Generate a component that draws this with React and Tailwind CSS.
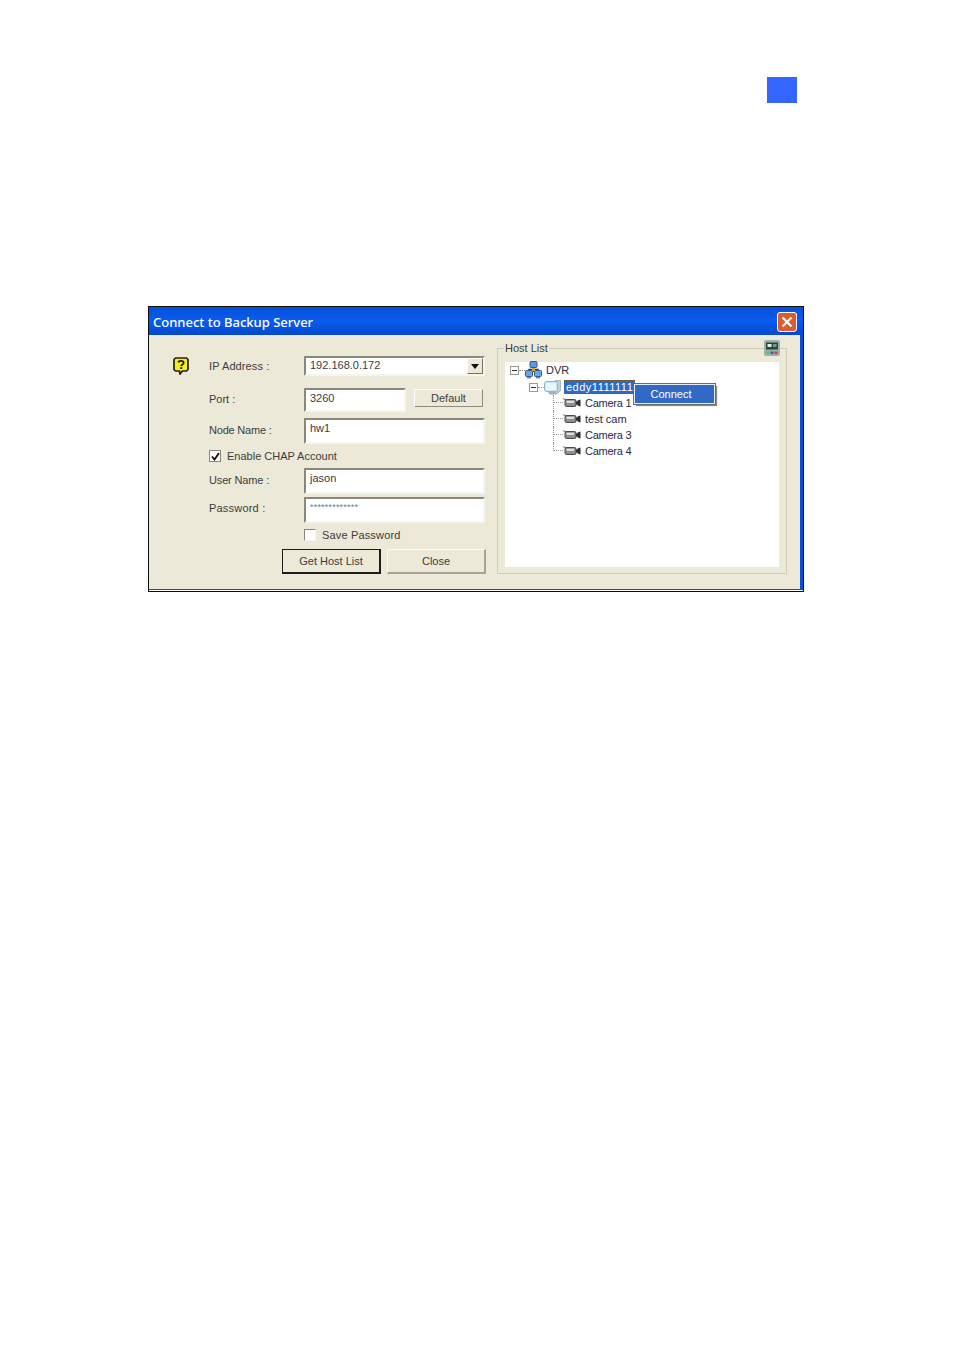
import React from 'react';

const ui = "font-['Liberation_Sans',Arial,sans-serif] text-[11px] text-[#3c3c3c]";

const HelpIcon = () => (
  <svg width="16" height="18" viewBox="0 0 16 18">
    <path d="M2.5 1h11l1.5 1.5v10L13.5 14H9.5L7 17l-.5-3h-4L1 12.500V2.500z" fill="#f5ee1e" stroke="#23230a" strokeWidth="1.7" />
    <path d="M5.400 5.500c.3-2 5.200-2.200 5.200.4 0 1.700-2.300 1.500-2.400 3.200" fill="none" stroke="#23230a" strokeWidth="1.8" />
    <rect x="7.200" y="10.200" width="2" height="1.800" fill="#23230a" />
  </svg>
);

const NetworkIcon = () => (
  <svg width="17" height="18" viewBox="0 0 17 18">
    <path d="M8.500 6v5M4 11V8.500h9V11" fill="none" stroke="#2b3550" strokeWidth="1.400" />
    <rect x="5" y="0.500" width="7" height="6" rx="1" fill="#5c9ae4" stroke="#2f5a94" />
    <rect x="0.500" y="9.500" width="7" height="6" rx="1" fill="#69a6ea" stroke="#2f5a94" />
    <rect x="9.500" y="9.500" width="7" height="6" rx="1" fill="#69a6ea" stroke="#2f5a94" />
    <rect x="7" y="7" width="3" height="3" fill="#d8a21f" />
    <path d="M2 16.800h4M11 16.800h4" stroke="#7e8794" strokeWidth="1.400" />
  </svg>
);

const MonitorIcon = () => (
  <svg width="17" height="15" viewBox="0 0 17 15">
    <path d="M11 0.500h5.500v10l-3 3h-2z" fill="#c9ced6" stroke="#98a0aa" strokeWidth="0.700" />
    <rect x="0.500" y="1.500" width="13" height="10" rx="2" fill="#c6e8f8" stroke="#9cb2c2" />
    <rect x="2" y="3" width="10" height="7" rx="1" fill="#e6f6fd" />
    <path d="M4 12h7l2 2.500H5.500z" fill="#aab0b8" />
  </svg>
);

const CameraIcon = () => (
  <svg width="18" height="10" viewBox="0 0 18 10">
    <path d="M0 0.500l4 2" stroke="#777" strokeWidth="1.100" />
    <rect x="2" y="1.500" width="11" height="7" rx="1.500" fill="#8f8f8f" stroke="#3a3a3a" strokeWidth="0.900" />
    <rect x="3.500" y="2.800" width="7.500" height="2.200" fill="#dedede" />
    <path d="M13 3.500h1.500V2.500l3-1v7l-3-1V6.500H13z" fill="#2c2c2c" />
  </svg>
);

const ToolIcon = () => (
  <svg width="16" height="16" viewBox="0 0 16 16">
    <rect x="0" y="0" width="16" height="16" rx="2" fill="#9fb0a8" />
    <rect x="2" y="2.500" width="12" height="7" fill="#26453c" />
    <rect x="3.500" y="4" width="4" height="3" fill="#e4efe8" />
    <rect x="9" y="4" width="3.500" height="3" fill="#6f9c8a" />
    <rect x="2.500" y="11.500" width="3" height="2.500" fill="#3fcf5a" />
    <rect x="6.500" y="11.500" width="3" height="2.500" fill="#3b55d8" />
    <rect x="10.500" y="11.500" width="3" height="2.500" fill="#e0353a" />
  </svg>
);

const Expander = () => (
  <span className="flex h-[9px] w-[9px] shrink-0 items-center justify-center border border-[#9a9a8e] bg-white">
    <span className="h-px w-[5px] bg-[#333]" />
  </span>
);

const Field = ({ children, className = '' }) => (
  <div className={`border-2 border-t-[#8b887a] border-l-[#8b887a] border-r-[#f6f5ee] border-b-[#f6f5ee] bg-white pl-[4px] pt-[2px] leading-[13px] ${className}`}>
    {children}
  </div>
);

const FormRow = ({ label, labelClass = 'pb-px', className = '', children }) => (
  <div className={`flex items-center ${className}`}>
    <span className={`w-[95px] shrink-0 ${labelClass}`}>{label}</span>
    {children}
  </div>
);

const CameraRow = ({ name, nameClass = 'tracking-[-0.25px]', last }) => (
  <div className="ml-[48px] flex h-4 items-center">
    <div className={`w-[10px] shrink-0 self-start border-l border-dotted border-[#9a9a9a] ${last ? 'h-2' : 'h-4'}`}>
      <div className="h-2 border-b border-dotted border-[#9a9a9a]" />
    </div>
    <CameraIcon />
    <span className={`ml-[4px] ${nameClass}`}>{name}</span>
  </div>
);

export default function App() {
  return (
    <div className={`min-h-[1350px] bg-[#fefefe] pt-[77px] ${ui}`}>
      <div className="ml-[767px] h-[26px] w-[30px] bg-[#3366ff]" />

      <div className="ml-[148px] mt-[203px] h-[285px] w-[656px] border border-b-0 border-[#0d0d16] bg-[#0a4fdc]">
        <div className="flex h-[28px] items-center justify-between bg-gradient-to-b from-[#0550d8] via-[#0a5cf0] to-[#0348cc] pl-[4px] pr-[6px] pt-[2px]">
          <span className="pt-[2px] font-['Noto_Sans',sans-serif] text-[13px] font-medium text-white">Connect to Backup Server</span>
          <button className="flex h-[20px] w-[20px] items-center justify-center rounded-[3px] border border-white bg-[#de5a30]">
            <svg width="12" height="12" viewBox="0 0 12 12">
              <path d="M1.500 1.500l9 9M10.500 1.500l-9 9" stroke="#fff" strokeWidth="2.200" />
            </svg>
          </button>
        </div>

        <div className="mr-[3px] flex h-[254px] bg-[#ece9d8]">
          <div className="w-[60px] shrink-0 pl-[24px] pt-[22px]">
            <HelpIcon />
          </div>

          <div className="w-[288px] shrink-0 pt-[21px]">
            <FormRow label="IP Address :" labelClass="tracking-[0.1px]">
              <Field className="flex h-[20px] w-[181px] justify-between !pt-0 pr-0">
                <span className="pt-px">192.168.0.172</span>
                <span className="flex h-[16px] w-[16px] items-center justify-center border border-t-white border-l-white border-r-[#77756a] border-b-[#77756a] bg-[#ece9d8]">
                  <svg width="8" height="5" viewBox="0 0 8 5"><path d="M0 0h8L4 5z" fill="#111" /></svg>
                </span>
              </Field>
            </FormRow>
            <FormRow label="Port :" className="mt-[12px]">
              <Field className="h-[24px] w-[102px]">3260</Field>
              <button className="mb-[4px] ml-[8px] h-[18px] w-[69px] border border-t-white border-l-white border-r-[#8f8d80] border-b-[#8f8d80] bg-[#ece9d8]">Default</button>
            </FormRow>
            <FormRow label="Node Name :" labelClass="pb-px tracking-[-0.2px]" className="mt-[6px]">
              <Field className="h-[26px] w-[181px]">hw1</Field>
            </FormRow>
            <label className="mt-[6px] flex h-[12px] items-center">
              <span className="flex h-[12px] w-[12px] items-center justify-center border border-[#8b887a] bg-white">
                <svg width="9" height="9" viewBox="0 0 9 9"><path d="M1 4.500l2.500 3L8 1" fill="none" stroke="#111" strokeWidth="1.900" /></svg>
              </span>
              <span className="ml-[6px]">Enable CHAP Account</span>
            </label>
            <FormRow label="User Name :" labelClass="pb-px tracking-[-0.15px]" className="mt-[6px]">
              <Field className="h-[26px] w-[181px]">jason</Field>
            </FormRow>
            <FormRow label="Password :" labelClass="pb-[3px] tracking-[0.2px]" className="mt-[3px]">
              <Field className="h-[26px] w-[181px] text-[9px] tracking-[0.2px] text-[#5a7f9a]">*************</Field>
            </FormRow>
            <label className="ml-[95px] mt-[6px] flex h-[12px] items-center">
              <span className="h-[12px] w-[12px] border border-t-[#8b887a] border-l-[#8b887a] border-r-[#f6f5ee] border-b-[#f6f5ee] bg-white" />
              <span className="ml-[6px] tracking-[0.16px]">Save Password</span>
            </label>
            <div className="ml-[73px] mt-[8px] flex gap-[6px]">
              <button className="h-[25px] w-[99px] border border-b-2 border-r-2 border-[#1c1c1c] bg-[#ece9d8]">Get Host List</button>
              <button className="h-[25px] w-[99px] border border-b-2 border-r-2 border-t-[#fbfaf4] border-l-[#fbfaf4] border-r-[#a5a396] border-b-[#a5a396] bg-[#ece9d8]">Close</button>
            </div>
          </div>

          <div className="relative mt-[13px] h-[226px] w-[290px] shrink-0 border border-[#cfccba] px-[7px] pb-[6px] pt-[13px]">
            <span className="absolute -top-[7px] left-[6px] bg-[#ece9d8] px-px leading-[13px]">Host List</span>
            <span className="absolute -top-[9px] right-[6px] leading-none"><ToolIcon /></span>

            <div className="relative h-full bg-white text-[#2e2a3a]">
              <div className="flex h-4 items-center pl-[5px]">
                <Expander />
                <span className="w-[6px] border-b border-dotted border-[#9a9a9a]" />
                <NetworkIcon />
                <span className="ml-[4px]">DVR</span>
              </div>
              <div className="mt-px flex h-4 items-center pl-[24px]">
                <Expander />
                <span className="w-[6px] border-b border-dotted border-[#9a9a9a]" />
                <MonitorIcon />
                <span className="ml-[3px] flex h-[14px] w-[71px] items-center border border-dotted border-[#6b5a30] bg-[#316ac5] pl-px tracking-[0.5px] text-white">eddy1111111</span>
              </div>
              <CameraRow name="Camera 1" />
              <CameraRow name="test cam" nameClass="" />
              <CameraRow name="Camera 3" />
              <CameraRow name="Camera 4" last />

              <div className="absolute left-[129px] top-[22px] flex h-[20px] w-[81px] items-center justify-center border border-[#e6eaf4] bg-[#316ac5] pr-[7px] text-white shadow-[2px_2px_1px_#8d8d86] outline outline-1 outline-[#6b6b66]">
                Connect
              </div>
            </div>
          </div>
        </div>

        <div className="h-[2px] border-t border-[#0a4fdc] bg-[#fefefe]" />
      </div>
      <div className="ml-[148px] h-px w-[656px] bg-[#0d0d16]" />
    </div>
  );
}
